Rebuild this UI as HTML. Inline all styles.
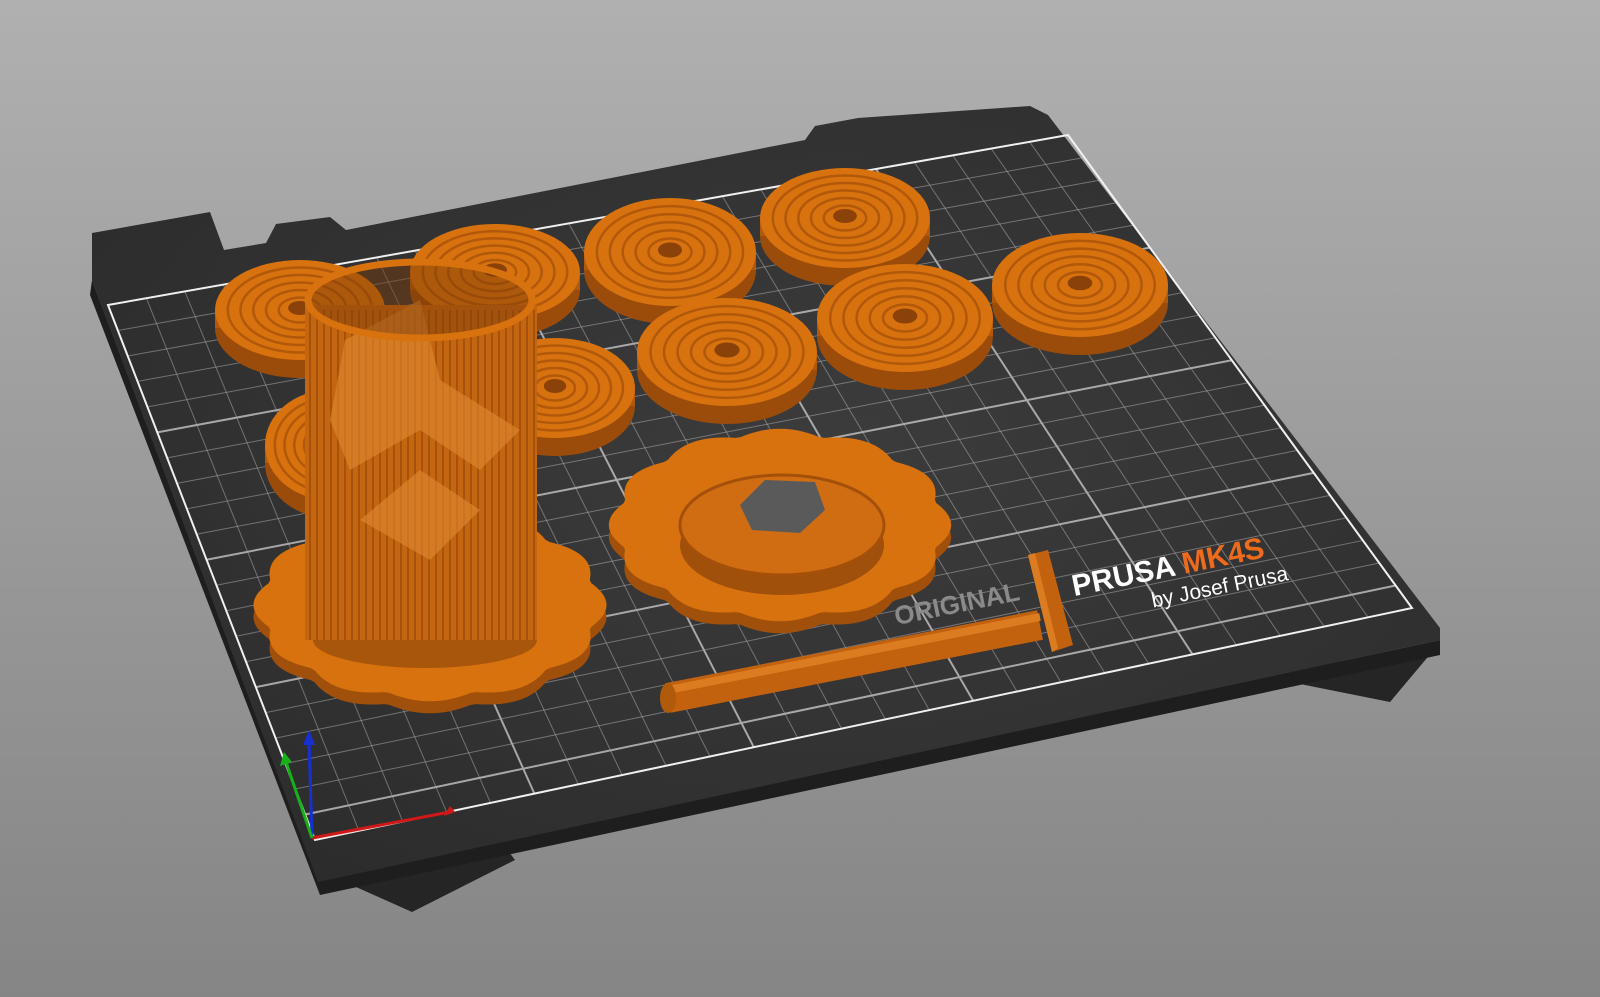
<!DOCTYPE html>
<html><head><meta charset="utf-8"><style>
html,body{margin:0;padding:0;width:1600px;height:997px;overflow:hidden;background:#999}
svg{display:block}
</style></head><body>
<svg id="s" width="1600" height="997" viewBox="0 0 1600 997" xmlns="http://www.w3.org/2000/svg">
<defs>
<linearGradient id="bg" x1="0" y1="0" x2="0" y2="1"><stop offset="0" stop-color="#b0b0b0"/><stop offset="1" stop-color="#858585"/></linearGradient>
<radialGradient id="bedg" cx="0.55" cy="0.45" r="0.7"><stop offset="0" stop-color="#3c3c3c"/><stop offset="1" stop-color="#2b2b2b"/></radialGradient>
</defs>
<rect width="1600" height="997" fill="url(#bg)"/>
<polygon points="318,870 412,912 515,860 500,840 330,860" fill="#252525"/>
<polygon points="1280,680 1390,702 1432,652 1300,665" fill="#252525"/>
<polygon points="92,280 318,880 1440,640 1440,655 320,895 90,295" fill="#1e1e1e"/>
<polygon points="92,233 210,212 224,250 266,243 276,224 330,217 346,230 805,140 815,126 858,118 1030,106 1048,115 1440,628 1440,640 318,882 92,280" fill="url(#bedg)"/>
<g id="grid" stroke="#cfcfcf" stroke-width="1" fill="none" opacity="0.75"></g>
<polygon points="108,305 1068,135 1412,608 315,840" fill="none" stroke="#f0f0f0" stroke-width="2"/>
<g transform="rotate(-11.5 1080 600)" font-family="Liberation Sans, sans-serif" font-weight="bold">
<text x="895" y="588" font-size="26" fill="#8a8a8a">ORIGINAL</text>
<text x="1075" y="595" font-size="30" fill="#ffffff">PRUSA <tspan fill="#ef6b1c">MK4S</tspan></text>
<text x="1150" y="622" font-size="21" fill="#ffffff" font-weight="normal">by Josef Prusa</text>
</g>
<g id="objs"></g>
<g stroke-width="3" fill="none">
<line x1="312" y1="838" x2="450" y2="812" stroke="#d01818"/>
<line x1="312" y1="838" x2="309" y2="740" stroke="#1830d0"/>
<line x1="312" y1="838" x2="286" y2="762" stroke="#18b018"/>
</g>
<polygon points="450,806 455,812 444,816" fill="#d01818"/>
<polygon points="303,745 309,730 315,745" fill="#1830d0"/>
<polygon points="280,766 284,752 292,762" fill="#18b018"/>
</svg>
<script>
var NS="http://www.w3.org/2000/svg";
var P=[[108,305],[1068,135],[1412,608],[315,840]];
function L(u,v){var a=P[0],b=P[1],c=P[2],d=P[3];
return [(1-u)*(1-v)*a[0]+u*(1-v)*b[0]+u*v*c[0]+(1-u)*v*d[0],(1-u)*(1-v)*a[1]+u*(1-v)*b[1]+u*v*c[1]+(1-u)*v*d[1]];}
var g=document.getElementById('grid');
function ln(p,q,w,o){var e=document.createElementNS(NS,'line');e.setAttribute('x1',p[0]);e.setAttribute('y1',p[1]);e.setAttribute('x2',q[0]);e.setAttribute('y2',q[1]);e.setAttribute('stroke-width',w);e.setAttribute('opacity',o);g.appendChild(e);}
var NU=25,NV=21;
for(var i=1;i<NU;i++){var u=i/NU;ln(L(u,0),L(u,1),i%5==0?2:1,i%5==0?1:0.55);}
for(var j=1;j<NV;j++){var v=j/NV;ln(L(0,v),L(1,v),j%5==0?2:1,j%5==0?1:0.55);}
var o=document.getElementById('objs');
function el(tag,at){var e=document.createElementNS(NS,tag);for(var k in at)e.setAttribute(k,at[k]);o.appendChild(e);return e;}
function disc(cx,cy,rx,ry){
el('ellipse',{cx:cx,cy:cy+18,rx:rx,ry:ry,fill:'#9c4c0a'});
el('rect',{x:cx-rx,y:cy,width:2*rx,height:18,fill:'#b0580c'});
el('ellipse',{cx:cx,cy:cy,rx:rx,ry:ry,fill:'#d8720f'});
for(var k=1;k<6;k++){var f=1-k*0.15;el('ellipse',{cx:cx,cy:cy,rx:rx*f,ry:ry*f,fill:'none',stroke:'#a4500a','stroke-width':2.5,opacity:0.75});}
el('ellipse',{cx:cx,cy:cy-2,rx:rx*0.14,ry:ry*0.14,fill:'#8a4208'});}
function flower(cx,cy,rx,ry){
var pts=[],pts2=[];for(var k=0;k<=360;k+=2){var a=k*Math.PI/180;var r=1+0.07*Math.abs(Math.cos(a*6));pts.push((cx+rx*r*Math.cos(a))+','+(cy+ry*r*Math.sin(a)));pts2.push((cx+rx*r*Math.cos(a))+','+(cy+12+ry*r*Math.sin(a)));}
el('polygon',{points:pts2.join(' '),fill:'#a0500a'});
el('polygon',{points:pts.join(' '),fill:'#d8720f'});}
disc(300,310,85,50);disc(495,272,85,48);disc(670,252,86,54);disc(845,218,85,50);
disc(1080,285,88,52);disc(330,445,65,55);disc(555,388,80,50);disc(905,318,88,54);disc(727,352,90,54);
flower(430,605,165,90);flower(780,525,160,90);
el('ellipse',{cx:782,cy:545,rx:102,ry:50,fill:'#a0500a'});
el('ellipse',{cx:782,cy:525,rx:102,ry:50,fill:'#d06c12',stroke:'#a4500a','stroke-width':3});
el('polygon',{points:'740,505 765,480 815,482 825,510 800,533 752,530',fill:'#5a5a5a'});
el('ellipse',{cx:425,cy:640,rx:112,ry:28,fill:'#a8560c'});
el('rect',{x:305,y:305,width:232,height:335,fill:'#c4650f'});
for(var x=310;x<535;x+=7)el('line',{x1:x,y1:310,x2:x,y2:640,stroke:'#9c4c08','stroke-width':1.5});
el('polygon',{points:'345,340 420,300 440,380 520,430 480,470 420,430 350,470 330,420',fill:'#e08a30',opacity:0.6});
el('polygon',{points:'360,520 420,470 480,510 430,560',fill:'#e08a30',opacity:0.6});
el('ellipse',{cx:420,cy:300,rx:112,ry:38,fill:'#7a3c08',opacity:0.45});
el('ellipse',{cx:420,cy:300,rx:112,ry:38,fill:'none',stroke:'#d8720f','stroke-width':7});
el('line',{x1:668,y1:698,x2:1040,y2:625,stroke:'#c2620e','stroke-width':30});
el('line',{x1:668,y1:690,x2:1040,y2:617,stroke:'#dc7c20','stroke-width':8});
el('ellipse',{cx:668,cy:698,rx:8,ry:15,fill:'#b05a0c'});
el('polygon',{points:'1028,555 1048,550 1073,645 1052,652',fill:'#c2620e'});
el('polygon',{points:'1028,555 1035,553 1058,648 1052,652',fill:'#dc7c20'});
</script>
</body></html>
